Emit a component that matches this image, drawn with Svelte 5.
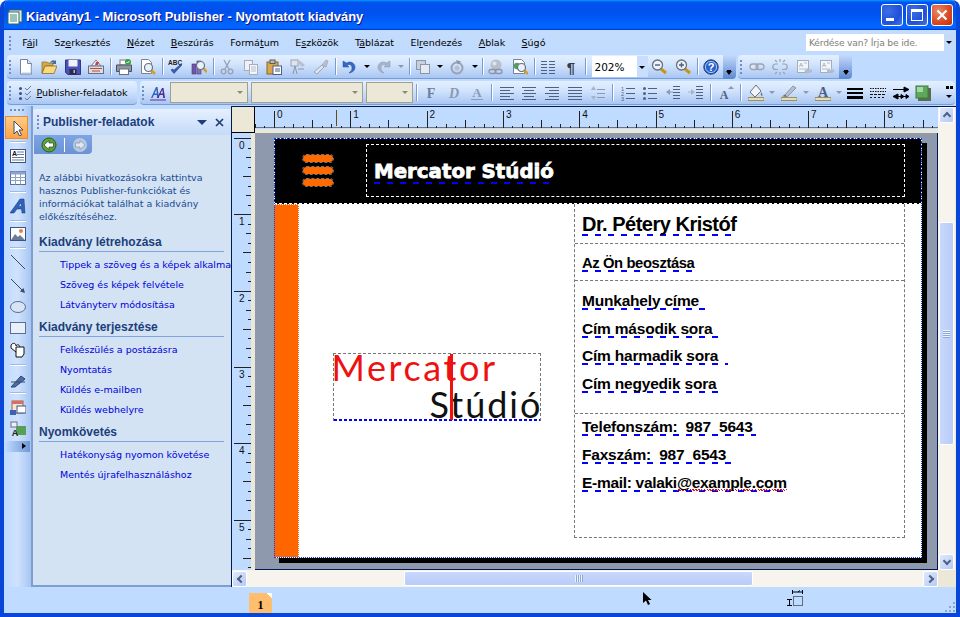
<script>
	const line = (list, c = '#4d6185') =>
		`<path d="${list.map(([a, b, y]) => `M${a} ${y + 0.5}H${b}`).join('')}" stroke="${c}" fill="none"/>`;
	const glass = (x, y, extra = '') =>
		`<path d="M${x + 6} ${y + 6}l4 4" stroke="#d8a020" stroke-width="2.6"/><circle cx="${x + 3.5}" cy="${y + 3.5}" r="4" fill="#e8f0fa" stroke="#68707c" stroke-width="1.2"/>${extra}`;

	const icons = {
		new: '<path d="M2.5.5h7l4 4v10.500h-11z" fill="#fff" stroke="#76849c"/><path d="M9.500.5v4h4" fill="#dfe6f2" stroke="#76849c"/><path d="M4 14h9v-8" stroke="#b8c8e4" fill="none"/>',
		open: '<path d="M1 3h5l1 1h5v3H4l-3 7z" fill="#d8a848" stroke="#8c6c28" stroke-width=".7"/><path d="M4 7h12l-3 7.500H1z" fill="#f8d880" stroke="#8c6c28" stroke-width=".8"/><path d="M9 4c1-3 4-3.500 5-2l1-1v4h-4l1.500-1.200C12 3.300 10.500 3 9 4z" fill="#42709c"/>',
		save: '<path d="M.5 1h15v14.500H3l-2.500-2z" fill="#4a52b4" stroke="#30348c"/><rect x="3.500" y="1" width="9" height="6.500" fill="#eef0fa"/><rect x="4.500" y="10" width="7" height="5.500" fill="#2b2b4a"/><rect x="8.500" y="11" width="1.500" height="3" fill="#b8bcd8"/>',
		mail: '<path d="M3 7l5-6 5 6z" fill="#f4f4f4" stroke="#77808e"/><path d="M8 3h3l-1 3H7z" fill="#d04040"/><rect x=".5" y="7" width="15" height="7.500" fill="#d8dde6" stroke="#68707e"/><path d="M2 9.500h12M4 12h8" stroke="#c04a3a"/>',
		print: '<rect x="4" y="1" width="8" height="5" fill="#fff" stroke="#7a7a7a"/><path d="M.5 6h15v6.500H.5z" fill="#8c96a4" stroke="#4a4f5a"/><rect x="3.500" y="10" width="9" height="5.500" fill="#fff" stroke="#68707e"/><circle cx="12" cy="3" r="3" fill="#3aa040"/><path d="M10.500 3l1 1 2-2" stroke="#fff" fill="none"/>',
		preview: '<path d="M1.500.5h7l3 3v11h-10z" fill="#fff" stroke="#76849c"/>' + glass(5, 5),
		spell: '<text x="0" y="6" font-family="Liberation Sans" font-size="6.500" font-weight="700" fill="#222">ABC</text><path d="M3 11l3 3.500 8-8.500-1-1-7 6-2-1z" fill="#3060b8" stroke="#203878" stroke-width=".5"/>',
		research: '<rect x="1" y="5" width="4" height="10" fill="#7058a8" stroke="#483878" stroke-width=".6"/><rect x="6" y="2" width="4" height="13" fill="#8870b8" stroke="#483878" stroke-width=".6"/>' + glass(6, 3),
		cut: '<g stroke="#98a2b4" fill="none" stroke-width="1.300"><path d="M5 1l5 9M11 1L6 10"/><circle cx="4.500" cy="12.500" r="2.300"/><circle cx="11.500" cy="12.500" r="2.300"/></g>',
		copy: '<rect x="1.500" y="1.500" width="8" height="10" fill="#eef2f8" stroke="#a4adbc"/><rect x="6.500" y="5.500" width="8" height="10" fill="#f4f6fb" stroke="#a4adbc"/><path d="M8 8h5M8 10h5M8 12h5" stroke="#b4bccb"/>',
		paste: '<rect x="1" y="3" width="11" height="12" fill="#d8a848" stroke="#8c6428"/><rect x="4" y="1" width="5" height="3.500" fill="#b8bcc8" stroke="#5a5a5a"/><rect x="7" y="7" width="8.500" height="8.500" fill="#fff" stroke="#4a5f85"/><path d="M9 10h5M9 12h5" stroke="#4a5f85"/>',
		fmtobj: '<rect x="1" y="1" width="7" height="6" fill="#dfe4ee" stroke="#9aa4b4"/><path d="M3 15l2-8 2 8M8 10h6" stroke="#8a95a8" fill="none"/><path d="M9 1l6 5-3 2-3-3z" fill="#b8c0d0"/>',
		brush: '<path d="M9 6L1 13l3 2 7-7z" fill="#e0e4ec" stroke="#9aa4b4"/><path d="M9 6l4-5 2 1-2 6z" fill="#b8c0d0" stroke="#9aa4b4" stroke-width=".7"/>',
		undo: '<path d="M2 2v6h6L6 6c3-1.500 5 .500 5 3 0 2-1 3.500-3 5 4-.500 6-3 6-6 0-4-5-6.500-8.500-4z" fill="#3568c8" stroke="#28509c" stroke-width=".5"/>',
		redo: '<path d="M14 2v6H8l2-2c-3-1.500-5 .500-5 3 0 2 1 3.500 3 5-4-.500-6-3-6-6 0-4 5-6.500 8.500-4z" fill="#a8b4c8" stroke="#8a96aa" stroke-width=".5"/>',
		group: '<rect x="1.500" y="1.500" width="9" height="9" fill="#c8d0de" stroke="#8a95a8"/><rect x="5.500" y="5.500" width="9" height="9" fill="#e4e9f2" stroke="#8a95a8"/>',
		rotate: '<circle cx="8" cy="9" r="5.500" fill="none" stroke="#98a2b4" stroke-width="2"/><circle cx="8" cy="9" r="2.500" fill="#b8c0d0"/><path d="M7 1l5 1.500-3 3z" fill="#8a95a8"/>',
		globe: '<circle cx="8" cy="6" r="5.500" fill="#b8c0cc"/><circle cx="6.500" cy="4.500" r="2" fill="#dfe4ea"/><g fill="none" stroke="#8a95a8" stroke-width="1.300"><rect x="1" y="10.500" width="7" height="4" rx="2"/><rect x="7" y="10.500" width="7" height="4" rx="2"/></g>',
		webprev: '<path d="M1.500.5h8l3 3v11h-11z" fill="#fff" stroke="#76849c"/><circle cx="5" cy="7" r="3.200" fill="#50a060"/>' + glass(6, 5),
		cols: line([[1, 7, 2], [9, 15, 2], [1, 7, 5], [9, 15, 5], [1, 7, 8], [9, 15, 8], [1, 7, 11], [9, 15, 11], [1, 7, 14], [9, 15, 14]]),
		para: '<text x="8" y="14" text-anchor="middle" font-family="Liberation Sans" font-size="15" font-weight="700" fill="#333a48">¶</text>',
		zoomout: '<path d="M10 10l5 4" stroke="#c89418" stroke-width="3"/><circle cx="6.500" cy="6" r="5" fill="#eef3fa" stroke="#68707c" stroke-width="1.300"/><path d="M4 6h5" stroke="#4a5f85" stroke-width="1.400"/>',
		zoomin: '<path d="M10 10l5 4" stroke="#c89418" stroke-width="3"/><circle cx="6.500" cy="6" r="5" fill="#eef3fa" stroke="#68707c" stroke-width="1.300"/><path d="M4 6h5M6.500 3.500v5" stroke="#4a5f85" stroke-width="1.400"/>',
		help: '<circle cx="8" cy="8" r="7.200" fill="#2c62c8" stroke="#1c3c8c"/><circle cx="8" cy="8" r="5.600" fill="none" stroke="#a8c8f4"/><text x="8" y="12" text-anchor="middle" font-family="Liberation Sans" font-size="11" font-weight="700" fill="#fff">?</text>',
		link: '<g fill="#dfe4ee" stroke="#9aa4b4" stroke-width="1.300"><rect x="1" y="5" width="8" height="5.500" rx="2.700"/><rect x="7" y="5" width="8" height="5.500" rx="2.700" fill="none"/></g>',
		unlink: '<g fill="none" stroke="#9aa4b4" stroke-width="1.200"><path d="M6 5H3.500a2.700 2.700 0 000 5.500H6M10 5h2.500a2.700 2.700 0 010 5.500H10M8 0v3M3 1l2 2M13 1l-2 2M8 13v3M3 15l2-2M13 15l-2-2"/></g>',
		flowprev: '<rect x="1.500" y="1.500" width="11" height="12" fill="#f2f5fa" stroke="#a4adbc"/><text x="3" y="7.500" font-family="Liberation Sans" font-size="6" fill="#8a95a8">A</text><path d="M8 4h3M3 10h8" stroke="#b4bccb"/><path d="M8 12l4-3v1.500h4v3h-4V15z" fill="#b4bccb"/>',
		flownext: '<rect x="1.500" y="1.500" width="11" height="12" fill="#f2f5fa" stroke="#a4adbc"/><text x="3" y="7.500" font-family="Liberation Sans" font-size="6" fill="#8a95a8">A</text><path d="M8 4h3M3 10h8" stroke="#b4bccb"/><path d="M16 12l-4-3v1.500H8v3h4V15z" fill="#b4bccb"/>',
		tasks: '<g fill="#3c5484"><rect x="1" y="2" width="3" height="3" rx="1.500"/><rect x="1" y="7" width="3" height="3" rx="1.500"/><rect x="1" y="12" width="3" height="3" rx="1.500"/></g><path d="M7 3l2 2 4-4M7 8l2 2 4-4M7 13l2 2 4-4" stroke="#6c7c98" fill="none"/>',
		styles: '<path d="M1 13L6 2h1.500l1.500 11H7.200l-.3-3H3.800l-1.300 3zM4.500 8.500h2.300L6.400 4.500z" fill="#3060b8"/><path d="M7 13l5-10h1.500l1.500 10h-1.800l-.3-3H9.800l-1.300 3zM10.500 8.500h2.300l-.4-3.500z" fill="#4a2c8c"/><path d="M0 15h16" stroke="#6a2c9c"/>',
		bold: '<text x="8" y="13" text-anchor="middle" font-family="Liberation Serif" font-size="14" font-weight="700" fill="#6c7ea0">F</text>',
		ital: '<text x="8" y="13" text-anchor="middle" font-family="Liberation Serif" font-size="14" font-weight="700" font-style="italic" fill="#8a99b4">D</text>',
		under: '<text x="8" y="12" text-anchor="middle" font-family="Liberation Serif" font-size="13" font-weight="700" fill="#8a99b4">A</text><path d="M2 14.500h12" stroke="#8a99b4"/>',
		left: line([[1, 15, 2], [1, 11, 5], [1, 15, 8], [1, 11, 11], [1, 15, 14]]),
		center: line([[1, 15, 2], [3, 13, 5], [1, 15, 8], [3, 13, 11], [1, 15, 14]]),
		right: line([[1, 15, 2], [5, 15, 5], [1, 15, 8], [5, 15, 11], [1, 15, 14]]),
		just: line([[1, 15, 2], [1, 15, 5], [1, 15, 8], [1, 15, 11], [1, 15, 14]]),
		spacing: line([[7, 15, 4], [7, 15, 8], [7, 15, 12]], '#8a99b4') + '<path d="M3.500 1l-2.500 4h5zM3.500 15L1 11h5z" fill="#a8b4c8"/>',
		num: line([[6, 15, 3], [6, 15, 8], [6, 15, 13]]) + '<text x="1" y="5.500" font-family="Liberation Sans" font-size="5.500" fill="#4d6185">1</text><text x="1" y="10.500" font-family="Liberation Sans" font-size="5.500" fill="#4d6185">2</text><text x="1" y="15.500" font-family="Liberation Sans" font-size="5.500" fill="#4d6185">3</text>',
		bull: line([[6, 15, 3], [6, 15, 8], [6, 15, 13]]) + '<g fill="#4d6185"><circle cx="2.500" cy="3.500" r="1.500"/><circle cx="2.500" cy="8.500" r="1.500"/><circle cx="2.500" cy="13.500" r="1.500"/></g>',
		outdent: line([[8, 15, 1], [8, 15, 4], [8, 15, 7], [8, 15, 10], [8, 15, 13]]) + '<path d="M1 7l4-3v6z" fill="#8a99b4"/><path d="M4 7h4" stroke="#8a99b4"/>',
		indent: line([[8, 15, 1], [8, 15, 4], [8, 15, 7], [8, 15, 10], [8, 15, 13]]) + '<path d="M7 7L3 4v6z" fill="#a8b4c8"/><path d="M0 7h4" stroke="#a8b4c8"/>',
		grow: '<text x="6" y="14" text-anchor="middle" font-family="Liberation Serif" font-size="12" font-weight="700" fill="#4d6185">A</text><path d="M10 4h6l-3-3z" fill="#8a99b4"/>',
		fill: '<path d="M8 0l5 6-6 6-5-5z" fill="#f2f4f8" stroke="#68707e"/><path d="M13 7c1.500 2 2 3 1 4-1 0-1.500-2-1-4z" fill="#68707e"/><rect x="0" y="12.500" width="16" height="3" fill="#e8dcb4" stroke="#9a9068"/>',
		pen: '<path d="M3 11L12 1l3 2-9 9z" fill="#b8c0d0" stroke="#8a95a8"/><path d="M1 11.500l3-2 2 2z" fill="#68707e"/><rect x="0" y="12.500" width="16" height="3" fill="#e8dcb4" stroke="#9a9068"/>',
		color: '<text x="8" y="11.500" text-anchor="middle" font-family="Liberation Serif" font-size="14" font-weight="700" fill="#4a5f85">A</text><rect x="0" y="12.500" width="16" height="3" fill="#e8dcb4" stroke="#9a9068"/>',
		lines: '<g fill="#000"><rect x="0" y="3" width="16" height="2"/><rect x="0" y="7" width="16" height="2"/><rect x="0" y="11" width="16" height="3"/></g>',
		dash: '<g stroke="#111" stroke-dasharray="1.500 1" fill="none"><path d="M0 3.500h16M0 6.500h16"/><path d="M0 9.500h16" stroke-dasharray="3 1"/><path d="M0 12.500h16" stroke-dasharray="2 2"/></g>',
		arrows: '<g stroke="#000" fill="#000"><path d="M0 4.500h14" fill="none"/><path d="M16 4.500l-5-2.500v5z"/><path d="M3 11.500h13" fill="none"/><path d="M0 11.500l5-2.500v5z"/><path d="M11 11.500l-3-2v4zM16 11.500l-3-2v4z"/></g>',
		shadow: '<rect x="3" y="3" width="13" height="13" fill="#5a6c50"/><rect x="1" y="1" width="12" height="12" fill="#5ca85c" stroke="#3c7a3c"/><rect x="2" y="2" width="6" height="5" fill="#a4d8a4"/>',
		pointer: '<path d="M5 1v13l3-3 2.500 5 2-1-2.500-5h4z" fill="#fff" stroke="#3c4a68"/>',
		textbox: '<rect x=".5" y="1.500" width="15" height="13" fill="#fff" stroke="#3c5484"/><text x="2" y="8" font-family="Liberation Sans" font-size="7" font-weight="700" fill="#111">A</text><path d="M7 4h7M7 6.500h7M2 9.500h12M2 12h12" stroke="#6c7c98"/>',
		table: '<rect x=".5" y="1.500" width="15" height="13" fill="#fff" stroke="#5c6e94"/><rect x=".5" y="1.500" width="15" height="3" fill="#8ca4d4"/><path d="M.5 7.500h15M.5 10.500h15M5.500 1.500v13M10.500 1.500v13" stroke="#8ca4c4"/>',
		wordart: '<path d="M0 15L10 1h4l1 14h-3l-.4-4H7l-3 4zM8.500 8.500h3L11 4.500z" fill="#2c62c0" stroke="#16306c" stroke-width=".5"/>',
		picture: '<rect x=".5" y="1.500" width="15" height="13" fill="#fff" stroke="#3c5484"/><path d="M1 14l4-6 3 3 2-2 5 5z" fill="#6c7c98"/><circle cx="11" cy="5" r="2" fill="#e88040"/>',
		ln: '<path d="M1 1l14 14" stroke="#3c4a68"/>',
		arrowline: '<path d="M1 1l13 13" stroke="#3c4a68"/><path d="M15 15l-5-1.500 3.500-3.500z" fill="#3c4a68"/>',
		oval: '<ellipse cx="8" cy="8" rx="7.500" ry="5.500" fill="#d8e4f4" stroke="#5c6e94"/>',
		rect: '<rect x=".5" y="2.500" width="15" height="11" fill="#e8f0fa" stroke="#5c6e94"/>',
		shapes: '<path d="M1 4c0-3 5-4 5 0 2-3 5 0 3 3l-3 3-5-4z" fill="#fff" stroke="#111"/><path d="M6 5h8v7l-2 3H6z" fill="#fff" stroke="#111"/>',
		design: '<path d="M1 14L11 3l4 3-10 8z" fill="#4c6ea8" stroke="#2c4478"/><path d="M1 9h14" stroke="#3c4a68"/>',
		catalog: '<rect x="2" y="1" width="11" height="12" fill="#f8e4d8" stroke="#a85c48"/><rect x="2" y="1" width="11" height="3" fill="#d87060"/><rect x="7" y="6" width="9" height="7" fill="#fff" stroke="#3c5484"/><rect x="0" y="10" width="6" height="5" fill="#3c62b0"/>',
		measure: '<rect x="6" y="5" width="10" height="9" fill="#58a058"/><rect x="1" y="1" width="6" height="5" fill="#eef" stroke="#68707e"/><text x="5" y="15" text-anchor="middle" font-family="Liberation Sans" font-size="9" font-weight="700" fill="#222">A</text>'
	};

	// '|' is a separator, 'v' a dropdown arrow, 'g' a greyed arrow, 'n' a narrow greyed one
	const row1 = ['new', 'open', 'save', 'mail', '|', 'print', 'preview', '|', 'spell', 'research', '|', 'cut', 'copy', 'paste', 'fmtobj', 'brush', '|', 'undo', 'v', 'redo', 'g', '|', 'group', 'v', 'rotate', 'v', '|', 'globe', 'webprev', '|', 'cols', 'para', '|'];
	const row1b = ['zoomout', 'zoomin', '|', 'help'];
	const row1c = ['link', 'unlink', 'flowprev', 'flownext'];
	const row2 = ['bold', 'ital', 'under', '|', 'left', 'center', 'right', 'just', 'spacing', '|', 'num', 'bull', 'outdent', 'indent', '|', 'grow', '|', 'fill', 'g', 'pen', 'g', 'color', 'n', 'lines', 'dash', 'arrows', 'shadow'];

	const menu = [
		['F', 'á', 'jl'], ['Sz', 'e', 'rkesztés'], ['', 'N', 'ézet'], ['', 'B', 'eszúrás'], ['Formá', 't', 'um'],
		['E', 's', 'zközök'], ['T', 'á', 'blázat'], ['El', 'r', 'endezés'], ['', 'A', 'blak'], ['', 'S', 'úgó']
	];

	const strip = [
		{ n: 'textbox', h: 23 }, { n: 'table', h: 22 }, { sep: 1 }, { n: 'wordart', h: 24 }, { sep: 1 },
		{ n: 'picture', h: 22 }, { sep: 1 }, { n: 'ln', h: 24 }, { n: 'arrowline', h: 23 }, { n: 'oval', h: 20 },
		{ n: 'rect', h: 22 }, { n: 'shapes', h: 21 }, { gap: 2 }, { sep: 1 }, { gap: 4.5 }, { n: 'design', h: 18 }, { sep: 1 },
		{ n: 'catalog', h: 26 }, { n: 'measure', h: 16 }
	];

	const sections = [
		{ t: 'Kiadvány létrehozása', links: ['Tippek a szöveg és a képek alkalmazásához', 'Szöveg és képek felvétele', 'Látványterv módosítása'] },
		{ t: 'Kiadvány terjesztése', links: ['Felkészülés a postázásra', 'Nyomtatás', 'Küldés e-mailben', 'Küldés webhelyre'] },
		{ t: 'Nyomkövetés', links: ['Hatékonyság nyomon követése', 'Mentés újrafelhasználáshoz'] }
	];

	const address = ['Munkahely címe', 'Cím második sora', 'Cím harmadik sora', 'Cím negyedik sora'];
	const pads = [8, 9, 10, 4];

	const INCH = 76.3;
	const ticks = [];
	for (let i = -2; i < 8 * 9; i++) {
		ticks.push({ p: Math.round(i * INCH / 8) + 0.5, k: i % 8 === 0 ? 3 : i % 4 === 0 ? 2 : i % 2 === 0 ? 1 : 0 });
	}
	const inches = [0, 1, 2, 3, 4, 5, 6, 7, 8];
	const hLen = [2, 4, 8, 17];
	const vLen = [3, 5, 8, 17];
</script>

{#snippet ic(name)}
	<svg class="ic" viewBox="0 0 16 16" width="16" height="16">{@html icons[name]}</svg>
{/snippet}

{#snippet tools(list)}
	{#each list as t}
		{#if t === '|'}
			<span class="sep"></span>
		{:else if t === 'v' || t === 'g' || t === 'n'}
			<span class="drop" class:grey={t !== 'v'} class:narrow={t === 'n'}></span>
		{:else}
			<span class="btn">{@render ic(t)}</span>
		{/if}
	{/each}
{/snippet}

{#snippet sq(text, cls = '', pad = 0)}
	<span class="sq {cls}" style="padding-right:{pad}px">{text}</span>
{/snippet}

<div class="window">
	<header class="title">
		<svg class="appicon" viewBox="0 0 16 16" width="16" height="16">
			<rect x="2" y="1" width="13" height="12" fill="#dfeee8" stroke="#2a6a60" />
			<rect x="1" y="3" width="11" height="12" fill="#fff" stroke="#2a6a60" />
			<path d="M3 6h7M3 8h7M3 10h7M3 12h7" stroke="#3a8a78" />
		</svg>
		<span class="caption">Kiadvány1 - Microsoft Publisher - Nyomtatott kiadvány</span>
		<div class="winbtns">
			<span class="wb"><i class="min"></i></span>
			<span class="wb"><i class="max"></i></span>
			<span class="wb close">
				<svg viewBox="0 0 12 12" width="12" height="12"><path d="M1.500 1.500l9 9M10.500 1.500l-9 9" stroke="#fff" stroke-width="2.200" /></svg>
			</span>
		</div>
	</header>

	<nav class="menubar">
		<span class="grip"></span>
		<div class="menus">
			{#each menu as m}
				<span>{m[0]}<u>{m[1]}</u>{m[2]}</span>
			{/each}
		</div>
		<div class="ask">
			<span>Kérdése van? Írja be ide.</span>
			<b class="askdrop"><i class="drop"></i></b>
		</div>
	</nav>

	<div class="row r1">
		<div class="bar main1">
			<span class="grip"></span>
			{@render tools(row1)}
			<div class="zoom"><span>202%</span><b><i class="drop"></i></b></div>
			{@render tools(row1b)}
			<span class="more"><i></i></span>
		</div>
		<div class="bar main1b">
			<span class="grip"></span>
			{@render tools(row1c)}
			<span class="more"><i></i></span>
		</div>
	</div>

	<div class="row r2">
		<div class="bar tasksbar">
			<span class="grip"></span>
			<span class="btn">{@render ic('tasks')}</span>
			<span class="tasklabel"><u>P</u>ublisher-feladatok</span>
		</div>
		<div class="bar fmt">
			<span class="grip"></span>
			<span class="btn">{@render ic('styles')}</span>
			<span class="combo c1"><i class="drop"></i></span>
			<span class="combo c2"><i class="drop"></i></span>
			<span class="combo c3"><i class="drop"></i></span>
			<span class="sep"></span>
			{@render tools(row2)}
			<span class="overflow"><i class="dots"></i><i class="drop"></i></span>
		</div>
	</div>

	<div class="main">
		<aside class="strip">
			<span class="stripgrip"></span>
			<span class="tool active" style="height:23px">{@render ic('pointer')}</span>
			<span class="tsep"></span>
			{#each strip as s}
				{#if s.sep}
					<span class="tsep"></span>
				{:else if s.gap}
					<span style="height:{s.gap}px;flex:none"></span>
				{:else}
					<span class="tool" style="height:{s.h}px">{@render ic(s.n)}</span>
				{/if}
			{/each}
			<span class="stripmore"></span>
		</aside>

		<section class="pane">
			<div class="panehead">
				<span class="panegrip"></span>
				<span class="panetitle">Publisher-feladatok</span>
				<span class="panedown"></span>
				<svg class="panex" viewBox="0 0 9 9" width="9" height="9"><path d="M1 1l7 7M8 1l-7 7" stroke="#1c3f7c" stroke-width="1.700" /></svg>
			</div>
			<div class="panenav">
				<svg viewBox="0 0 16 16" width="16" height="16">
					<circle cx="8" cy="8" r="7" fill="#58a838" stroke="#2c5c18" />
					<path d="M3 8l5-4.500V6h4.500v4H8v2.500z" fill="#fff" stroke="#222" stroke-width=".6" />
				</svg>
				<span class="navsep"></span>
				<svg viewBox="0 0 16 16" width="16" height="16">
					<circle cx="8" cy="8" r="7" fill="#b8c8de" />
					<path d="M13 8L8 3.500V6H3.500v4H8v2.500z" fill="#dfe7f2" stroke="#8294b0" stroke-width=".7" />
				</svg>
			</div>
			<p class="intro">Az alábbi hivatkozásokra kattintva hasznos Publisher-funkciókat és információkat találhat a kiadvány előkészítéséhez.</p>
			{#each sections as sec}
				<h3>{sec.t}</h3>
				{#each sec.links as l}
					<div class="plink">{l}</div>
				{/each}
			{/each}
		</section>

		<div class="work">
			<div class="corner"></div>
			<div class="hruler">
				<svg width="683" height="22">
					<path d="M0 20.500H683" stroke="#6a7488" />
					<g stroke="#222">
						{#each ticks as t}
							<path d="M{19 + t.p} {21 - hLen[t.k]}V21" />
						{/each}
					</g>
					<path d="M81.500 3V19" stroke="#6a4a1a" />
					{#each inches as n}
						<text x={22 + n * INCH} y="11" class="rnum">{n}</text>
					{/each}
				</svg>
			</div>
			<div class="vscroll">
				<span class="sbtn up"></span>
				<span class="vthumb"><i></i></span>
				<span class="sbtn down"></span>
			</div>
			<div class="vruler">
				<svg width="19" height="437">
					<g stroke="#222">
						{#each ticks as t}
							<path d="M{19 - vLen[t.k]} {5 + t.p}H19" />
						{/each}
					</g>
					{#each inches as n}
						<text x="7" y={16 + n * INCH} class="rnum">{n}</text>
					{/each}
				</svg>
			</div>
			<div class="canvas">
				<div class="page">
					<div class="banner">
						<div class="stripes"><i></i><i></i><i></i></div>
						<div class="namebox">{@render sq('Mercator Stúdió', 'brand')}</div>
					</div>
					<div class="body">
						<div class="edge"></div>
						<div class="logoarea">
							<div class="logo">
								<div class="lg1">Mercator</div>
								<div class="lg2">Stúdió</div>
								<i class="stem"></i>
							</div>
						</div>
						<div class="card">
							<div class="cell name">{@render sq('Dr. Pétery Kristóf', 'big')}</div>
							<div class="cell role">{@render sq('Az Ön beosztása', 'rolet')}</div>
							<div class="cell addr">
								{#each address as a, i}
									<div>{@render sq(a, '', pads[i])}</div>
								{/each}
							</div>
							<div class="cell contact">
								<div>{@render sq('Telefonszám: 987 5643', 'nums', 3)}</div>
								<div>{@render sq('Faxszám: 987 6543', 'nums', 5)}</div>
								<div>
									<span class="sq mail">E-mail: valaki<span class="wavy">@example.com</span></span>
								</div>
							</div>
						</div>
					</div>
				</div>
			</div>
			<div class="hscroll">
				<span class="sbtn left"></span>
				<span class="hthumb"><i></i></span>
				<span class="sbtn right"></span>
			</div>
			<div class="scorner"></div>
		</div>
	</div>

	<footer class="status">
		<span class="pagetab">1</span>
		<svg class="cursor" viewBox="0 0 10 14" width="10" height="14"><path d="M1 0v11l3-2.500 2 4.500 2-1-2-4h3.500z" fill="#000" /></svg>
		<svg class="sizeicon" viewBox="0 0 16 16" width="16" height="16">
			<path d="M5.500 2h10M15.500 0v4M5.500 0v4M11 2l2-1.500M0 9.500h5M0 15.500h5M2.500 9.500v6" stroke="#000" fill="none" />
			<rect x="6.500" y="6.500" width="9" height="9" fill="none" stroke="#000" stroke-dasharray="1 1" />
		</svg>
		<svg class="resize" viewBox="0 0 12 12" width="12" height="12">
			<g fill="#8ba6cc"><rect x="9" y="1" width="2" height="2" /><rect x="5" y="5" width="2" height="2" /><rect x="9" y="5" width="2" height="2" /><rect x="1" y="9" width="2" height="2" /><rect x="5" y="9" width="2" height="2" /><rect x="9" y="9" width="2" height="2" /></g>
		</svg>
	</footer>
</div>

<style>
	:global(body) {
		background: #fff;
		overflow: hidden;
	}

	.window {
		width: 960px;
		height: 617px;
		box-sizing: border-box;
		display: flex;
		flex-direction: column;
		background: #bfdbff;
		border: solid #0846d8;
		border-width: 0 4px 4px;
		border-radius: 8px 8px 0 0;
		font-family: 'DejaVu Sans', sans-serif;
		font-size: 9.5px;
		color: #000;
		overflow: hidden;
	}

	/* title */
	.title {
		height: 30px;
		margin: 0 -4px;
		flex: none;
		display: flex;
		align-items: center;
		padding: 0 7px;
		background: linear-gradient(180deg, #0997ff, #0053ee 8%, #0050ee 40%, #0066ff 88%, #0066ff 93%, #005bff 95%, #003dd7 96%, #003dd7);
	}

	.appicon { margin: 3px 3px 0 0; }

	.caption {
		font-family: 'Liberation Sans', sans-serif;
		font-size: 13px;
		font-weight: 700;
		color: #fff;
		text-shadow: 1px 1px 0 #0f1089;
		padding-top: 2px;
	}

	.winbtns {
		margin-left: auto;
		display: flex;
		gap: 3px;
	}

	.wb {
		width: 20px;
		height: 20px;
		border: 1px solid #fff;
		border-radius: 3px;
		display: flex;
		align-items: center;
		justify-content: center;
		background: radial-gradient(circle at 30% 30%, #3c6ee8, #2050d8 60%, #4878e8);
	}

	.close { background: radial-gradient(circle at 30% 30%, #e88868, #d84820 60%, #c03010); }

	.min {
		width: 8px;
		height: 3px;
		background: #fff;
		margin: 9px 5px 0 0;
	}

	.max {
		border: 1px solid #fff;
		border-top-width: 3px;
		box-sizing: border-box;
		width: 12px;
		height: 12px;
	}

	/* menu */
	.menubar {
		height: 25px;
		flex: none;
		display: flex;
		align-items: center;
		padding-left: 5px;
		background: linear-gradient(180deg, #c4dcfc, #bfdbff);
	}

	.grip {
		width: 5px;
		height: 14px;
		flex: none;
		background: radial-gradient(circle at 1px 1px, #6f8fc4 1px, transparent 1.200px) 0 0 / 4px 4px repeat-y;
	}

	.menus { display: flex; }

	.menus span {
		padding: 0 8.200px;
		white-space: nowrap;
	}

	.ask {
		margin-left: auto;
		margin-right: 2px;
		width: 148px;
		height: 17px;
		background: #fff;
		display: flex;
		align-items: center;
		padding-left: 3px;
		box-sizing: border-box;
		color: #808080;
		font-size: 9.200px;
		letter-spacing: -0.2px;
	}

	.askdrop {
		margin-left: auto;
		width: 10px;
		height: 100%;
		background: #c3daf9;
		display: flex;
		align-items: center;
		justify-content: center;
	}

	/* toolbars */
	.row {
		height: 25px;
		flex: none;
		display: flex;
		padding-left: 3px;
		gap: 3px;
	}

	.r2 { margin-top: 1px; }

	.bar {
		height: 24px;
		display: flex;
		align-items: center;
		padding-left: 2px;
		box-sizing: border-box;
		border-radius: 4px;
		background: linear-gradient(180deg, #e4f0ff, #cfe2fc 45%, #a9c6f2);
		border-bottom: 1px solid #7a9cd4;
	}

	.main1 { width: 728px; }
	.main1b { width: 112px; }
	.tasksbar { width: 130px; }
	.fmt { width: 815px; }

	.btn {
		width: 23.500px;
		height: 22px;
		flex: none;
		display: flex;
		align-items: center;
		justify-content: center;
	}

	.fmt .btn { width: 22.800px; }

	.sep {
		width: 4.500px;
		height: 17px;
		flex: none;
		background: linear-gradient(90deg, transparent 2px, #7a9cd4 2px, #7a9cd4 3px, #fff 3px, #fff 4px, transparent 4px);
	}

	.fmt .sep { width: 7px; background-position: 1px 0; background-repeat: no-repeat; }

	.drop {
		width: 11px;
		height: 22px;
		flex: none;
		display: flex;
	}

	.drop.narrow { width: 9px; }

	.drop::after {
		content: '';
		margin: auto;
		border: 3px solid transparent;
		border-top: 3px solid #000;
		border-bottom: 0;
	}

	.drop.grey::after { border-top-color: #8a99b4; }

	.zoom {
		width: 56px;
		height: 21px;
		margin-left: 4px;
		flex: none;
		background: #fff;
		display: flex;
		align-items: center;
		font-size: 10.500px;
		padding-left: 3px;
		box-sizing: border-box;
	}

	.zoom b {
		margin-left: auto;
		width: 11px;
		height: 100%;
		background: #c9defc;
		display: flex;
		border-left: 1px solid #fff;
	}

	.more {
		width: 13px;
		height: 24px;
		margin-left: auto;
		flex: none;
		border-radius: 0 4px 4px 0;
		background: linear-gradient(180deg, #c4dafc, #86a8e4 60%, #5c88d0);
		display: flex;
		align-items: flex-end;
		justify-content: center;
		padding-bottom: 4px;
		box-sizing: border-box;
	}

	.more i {
		border: 3px solid transparent;
		border-top: 4px solid #000;
		border-bottom: 0;
		box-shadow: 0 -2px 0 -1px #000;
	}

	.tasklabel {
		white-space: nowrap;
		margin-left: -1px;
	}

	.combo {
		height: 21px;
		flex: none;
		margin-right: 3px;
		background: #ebe8d8;
		border: 1px solid #a39f8e;
		box-sizing: border-box;
		display: flex;
		justify-content: flex-end;
	}

	.combo .drop { width: 14px; height: 19px; }
	.combo .drop::after { border-top-color: #8a8a80; }
	.c1 { width: 78px; }
	.c2 { width: 112px; }
	.c3 { width: 47px; margin-right: 0; }

	.overflow {
		margin-left: auto;
		margin-right: 1px;
		width: 10px;
		height: 23px;
		display: flex;
		flex-direction: column;
		align-items: center;
	}

	.overflow .drop { width: 10px; height: 9px; }

	.dots {
		width: 7px;
		height: 3px;
		margin: 5px 0 3px;
		border-left: 3px solid #000;
		border-right: 3px solid #000;
		box-sizing: border-box;
	}

	/* main */
	.main {
		flex: 1;
		min-height: 0;
		display: flex;
	}

	.strip {
		width: 27px;
		flex: none;
		display: flex;
		flex-direction: column;
		align-items: center;
		padding-top: 3px;
		box-sizing: border-box;
		background: linear-gradient(90deg, #bfdbff, #cfe2fc 50%, #a8c6f2);
	}

	.stripgrip {
		width: 16px;
		height: 2px;
		margin: 0 0 5px;
		background: radial-gradient(circle at 1px 1px, #6f8fc4 1px, transparent 1.200px) 0 0 / 4px 4px repeat-x;
	}

	.tool {
		width: 100%;
		flex: none;
		display: flex;
		align-items: center;
		justify-content: center;
	}

	.active {
		width: 23px;
		margin-right: 2px;
		background: linear-gradient(180deg, #ffce8c, #fea040);
		outline: 1px solid #e88c30;
		outline-offset: -1px;
	}

	.tsep {
		width: 16px;
		height: 1px;
		margin: 2px 0;
		flex: none;
		background: #9ebbe8;
		box-shadow: 0 1px 0 #fff;
	}

	.stripmore {
		width: 25px;
		height: 11px;
		margin-top: 4px;
		flex: none;
		background: linear-gradient(90deg, #bfdbff, #6f96d8);
		position: relative;
	}

	.stripmore::after {
		content: '';
		position: absolute;
		left: 17px;
		top: 2px;
		border: 3px solid transparent;
		border-left: 4px solid #000;
		border-right: 0;
	}

	.pane {
		width: 200px;
		flex: none;
		box-sizing: border-box;
		background: #d3e3f3;
		border-left: 2px solid #7c9ed0;
		border-bottom: 2px solid #7c9ed0;
		overflow: hidden;
		white-space: nowrap;
		padding-top: 3px;
		box-shadow: inset 0 3px 0 #bfdbff;
	}

	.panehead {
		height: 26px;
		display: flex;
		align-items: center;
		background: linear-gradient(180deg, #e6f0ff, #c4daf8);
		border-radius: 3px 3px 0 0;
	}

	.panegrip {
		width: 3px;
		height: 15px;
		margin: 0 3px 0 4px;
		background: radial-gradient(circle at 1px 1px, #6f8fc4 1px, transparent 1.200px) 0 0 / 3px 4px repeat-y;
	}

	.panetitle {
		font-family: 'Liberation Sans', sans-serif;
		font-weight: 700;
		font-size: 12px;
		color: #1c3f7c;
	}

	.panedown {
		margin-left: auto;
		border: 5px solid transparent;
		border-top: 5px solid #1c3f7c;
		border-bottom: 0;
	}

	.panex { margin: 0 7px 0 8px; }

	.panenav {
		width: 58px;
		height: 19px;
		margin-left: 1px;
		background: linear-gradient(180deg, #7ea4e4, #6a92d4);
		border-radius: 0 0 4px 0;
		display: flex;
		align-items: center;
		padding-left: 7px;
		gap: 5px;
		box-sizing: border-box;
	}

	.navsep {
		width: 1px;
		height: 14px;
		background: #fff;
		margin: 0 2px;
	}

	.intro {
		margin: 17px 4px 0 6px;
		white-space: normal;
		line-height: 13px;
		color: #1a4a94;
		width: 180px;
	}

	h3 {
		margin: 4px 7px 0 6px;
		height: 18px;
		line-height: 16px;
		font-family: 'Liberation Sans', sans-serif;
		font-size: 12px;
		color: #1c3f7c;
		border-bottom: 1px solid #7ea4de;
		box-sizing: border-box;
	}

	.intro + h3 { margin-top: 11px; }

	.plink {
		height: 20px;
		line-height: 20px;
		padding-left: 27px;
		color: #0000e0;
	}

	h3 + .plink { margin-top: 3px; }

	.work {
		flex: 1;
		min-width: 0;
		border-left: 1px solid #001a50;
		border-top: 1px solid #001a50;
		display: grid;
		grid-template-columns: 23px 683px 17px;
		grid-template-rows: 26px 437px 18px;
		background: #ebe8d8;
	}

	.corner { background: #ebe8d8; border-bottom: 1px solid #000; border-right: 1px solid #000; }

	.hruler {
		background: #bfdbff;
		border-bottom: 4px solid #ebe8d8;
		box-sizing: border-box;
		overflow: hidden;
	}

	.vruler {
		background: #bfdbff;
		border-right: 4px solid #ebe8d8;
		box-sizing: border-box;
		overflow: hidden;
	}

	.rnum {
		font-family: 'Liberation Sans', sans-serif;
		font-size: 10px;
		fill: #111;
	}

	.vscroll {
		grid-column: 3;
		grid-row: 1 / 3;
		background: #f6f4ec;
		display: flex;
		flex-direction: column;
		align-items: center;
	}

	.sbtn {
		width: 15px;
		height: 16px;
		flex: none;
		box-sizing: border-box;
		border: 1px solid #fff;
		border-radius: 2px;
		background: linear-gradient(135deg, #dfe9fc, #b6c9f6);
		position: relative;
	}

	.sbtn::after {
		content: '';
		position: absolute;
		left: 3.500px;
		top: 4px;
		width: 6px;
		height: 6px;
		box-sizing: border-box;
		border: solid #4d6185;
		border-width: 2px 0 0 2px;
	}

	.up::after { transform: translateY(1px) rotate(45deg); }
	.down::after { transform: translateY(-1px) rotate(225deg); }
	.left::after { transform: translateX(1px) rotate(-45deg); }
	.right::after { transform: translateX(-1px) rotate(135deg); }

	.vthumb {
		width: 15px;
		height: 223px;
		margin: 99px 0 auto;
		box-sizing: border-box;
		border: 1px solid #fff;
		border-radius: 2px;
		background: linear-gradient(90deg, #c9d8fc, #b8ccf8);
		display: flex;
		align-items: center;
		justify-content: center;
	}

	.vthumb i {
		width: 7px;
		height: 8px;
		background: repeating-linear-gradient(180deg, #eef3ff 0 1px, #8ea6d8 1px 2px);
	}

	.canvas {
		background: #8e99ae;
		padding: 5px 0 0 19px;
		overflow: hidden;
		border-right: 1px solid #001a50;
		border-bottom: 1px solid #001a50;
		box-sizing: border-box;
	}

	.page {
		width: 648px;
		height: 420px;
		background: #fff;
		box-shadow: 5px 5px 0 #000;
		outline: 1px dotted #0040ff;
		outline-offset: -1px;
		display: flex;
		flex-direction: column;
	}

	.banner {
		height: 66px;
		flex: none;
		background: #000;
		outline: 1px dashed #fff;
		outline-offset: -1px;
		display: flex;
		align-items: flex-start;
		box-sizing: border-box;
		padding-top: 6px;
	}

	.stripes {
		width: 30px;
		margin: 11px 33px 0 29px;
		display: flex;
		flex-direction: column;
		gap: 5px;
	}

	.stripes i {
		height: 7px;
		border-radius: 4px;
		background: #ff6a00;
		outline: 1px dashed #777;
	}

	.namebox {
		width: 539px;
		height: 53px;
		box-sizing: border-box;
		border: 1px dashed #fff;
		padding: 16px 0 0 7px;
	}

	.sq {
		display: inline-block;
		background: repeating-linear-gradient(90deg, #00f 0 6px, transparent 6px 13px) left bottom / 100% 2px no-repeat;
		line-height: 1.15;
		white-space: nowrap;
	}

	.brand {
		font-family: 'DejaVu Sans', sans-serif;
		font-weight: 700;
		font-size: 19.800px;
		color: #fff;
		-webkit-text-stroke: 0.8px #fff;
	}

	.body {
		flex: 1;
		min-height: 0;
		display: flex;
	}

	.edge {
		width: 24.500px;
		flex: none;
		background: #ff6600;
		outline: 1px dotted #fff;
		outline-offset: -1px;
	}

	.logoarea {
		width: 275.500px;
		flex: none;
		padding: 149px 0 0 34px;
		box-sizing: border-box;
	}

	.logo {
		width: 208px;
		height: 68px;
		box-sizing: border-box;
		border: 1px dashed #777;
		border-bottom: 0;
		background: repeating-linear-gradient(90deg, #00f 0 3px, transparent 3px 5px) left bottom / 100% 2px no-repeat;
		position: relative;
		font-family: 'Lato', sans-serif;
		font-weight: 400;
	}

	.lg1 {
		color: #ee1111;
		font-size: 36px;
		line-height: 38px;
		margin: -6px 0 0 -2px;
		letter-spacing: 2.600px;
	}

	.lg2 {
		color: #111;
		font-size: 36px;
		line-height: 38px;
		margin: -1px 0 0 96px;
		letter-spacing: 2px;
	}

	.stem {
		position: absolute;
		left: 116px;
		top: 0;
		width: 3px;
		height: 66px;
		background: #ee1111;
	}

	.card {
		width: 331px;
		height: 334px;
		box-sizing: border-box;
		border: 1px dashed #777;
		border-top: 0;
		font-family: 'Liberation Sans', sans-serif;
		font-weight: 700;
		font-size: 15.500px;
		letter-spacing: -0.2px;
	}

	.cell {
		padding-left: 7px;
		box-sizing: border-box;
		border-bottom: 1px dashed #777;
	}

	.name { height: 40px; padding-top: 9px; }
	.big { font-size: 20px; letter-spacing: -0.5px; }
	.role { height: 37px; padding-top: 10px; }
	.rolet { font-size: 14.800px; letter-spacing: -0.4px; }

	.addr {
		height: 133px;
		padding-top: 11px;
		display: flex;
		flex-direction: column;
		gap: 9.700px;
	}

	.contact {
		height: 123px;
		border-bottom: 0;
		padding-top: 4px;
		display: flex;
		flex-direction: column;
		gap: 10px;
	}

	.nums { word-spacing: 4px; }
	.mail { letter-spacing: -0.3px; }

	.wavy {
		background: repeating-linear-gradient(45deg, #e01010 0 1px, transparent 1px 2px) left bottom / 100% 2px no-repeat;
	}

	.hscroll {
		grid-column: 1 / 3;
		display: flex;
		background: #f6f4ec;
		padding-top: 1px;
		box-sizing: border-box;
	}

	.hthumb {
		width: 349px;
		height: 15px;
		margin: 0 auto 0 157px;
		box-sizing: border-box;
		border: 1px solid #fff;
		border-radius: 2px;
		background: linear-gradient(180deg, #c9d8fc, #b8ccf8);
		display: flex;
		align-items: center;
		justify-content: center;
	}

	.hthumb i {
		width: 8px;
		height: 7px;
		background: repeating-linear-gradient(90deg, #eef3ff 0 1px, #8ea6d8 1px 2px);
	}

	.scorner { background: #ebe8d8; }

	/* status */
	.status {
		height: 26px;
		flex: none;
		display: flex;
		align-items: flex-end;
		position: relative;
		background: #bfdbff;
	}

	.pagetab {
		width: 23px;
		height: 20px;
		margin-left: 245px;
		background: linear-gradient(225deg, #fff 4px, #ffbe6e 4px);
		font-family: 'Liberation Serif', serif;
		font-weight: 700;
		font-size: 12px;
		text-align: center;
		line-height: 24px;
	}

	.cursor { position: absolute; left: 638px; top: 5px; }
	.sizeicon { position: absolute; left: 783px; top: 3px; }
	.resize { position: absolute; right: 0; bottom: 0; }
</style>
